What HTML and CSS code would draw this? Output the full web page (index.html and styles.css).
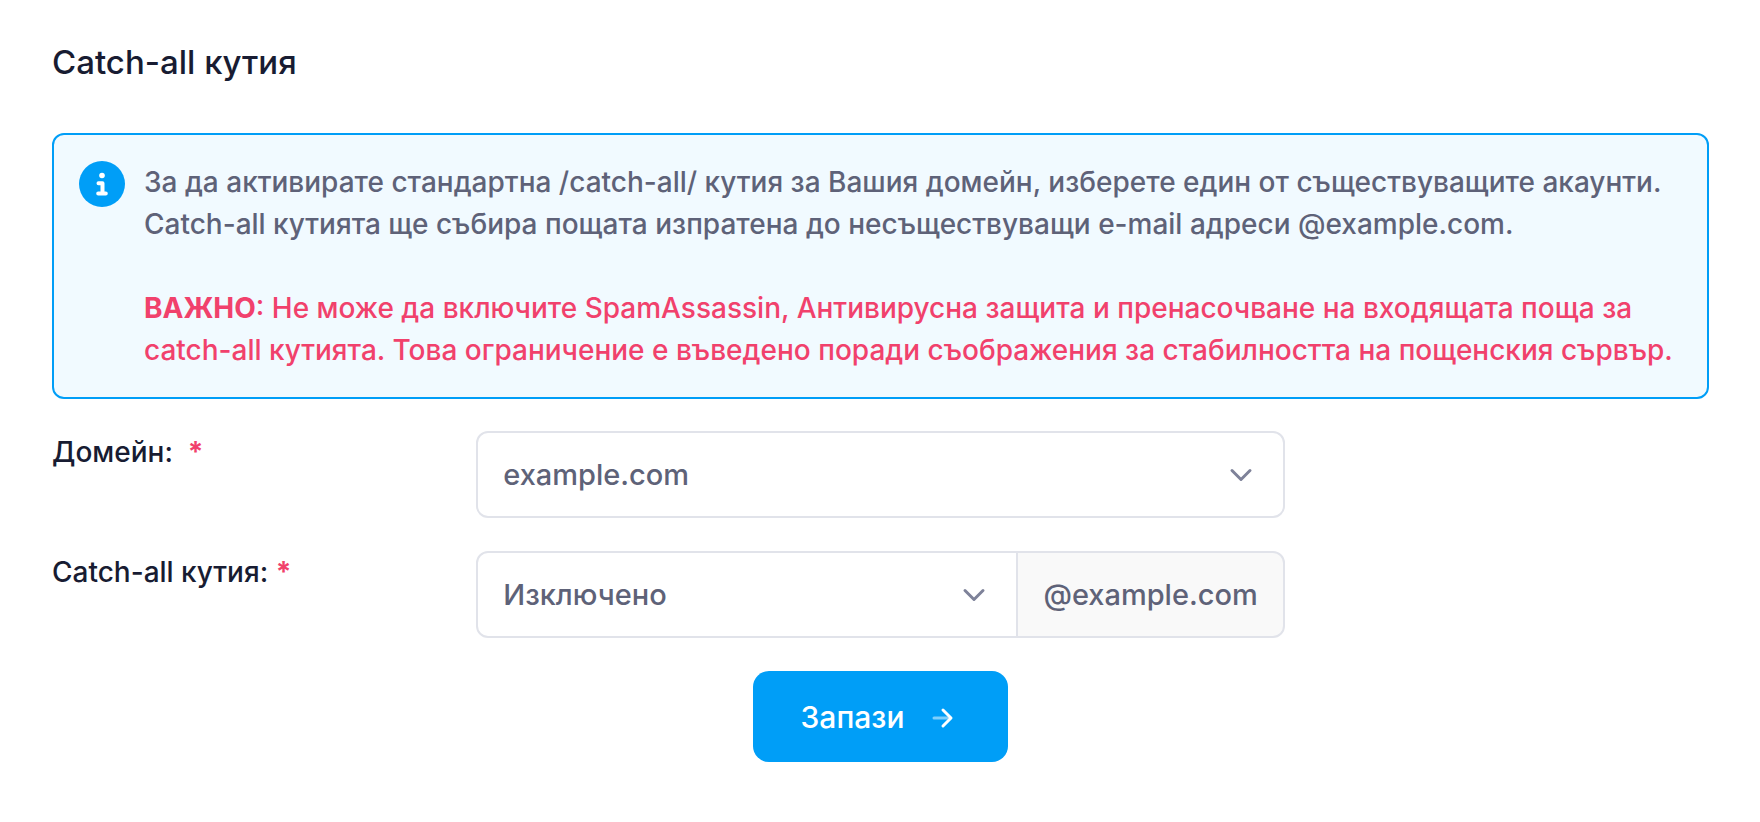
FILE: index.html
```html
<!DOCTYPE html>
<html lang="bg">
<head>
  <meta charset="UTF-8">
  <meta name="viewport" content="width=device-width, initial-scale=1">
  <title>Catch-all кутия</title>
  <link rel="stylesheet" href="styles.css">
</head>
<body>
  <main class="page">
    <h1>Catch-all кутия</h1>

    <div class="notice">
      <svg class="notice-icon" viewBox="0 0 46 46" aria-hidden="true">
        <circle cx="23" cy="23" r="23" fill="#009ef7"/>
        <circle cx="23" cy="14.5" r="2.8" fill="#fff"/>
        <path d="M19.5 22.2H23.5V32.2M19.2 32.4H26.8" fill="none" stroke="#fff" stroke-width="4" stroke-linecap="round" stroke-linejoin="round"/>
      </svg>
      <div class="notice-text">
        <p>За да активирате стандартна /catch-all/ кутия за Вашия домейн, изберете един от съществуващите акаунти. Catch-all кутията ще събира пощата изпратена до несъществуващи e-mail адреси @example.com.</p>
        <p class="danger"><strong>ВАЖНО</strong>: Не може да включите SpamAssassin, Антивирусна защита и пренасочване на входящата поща за catch-all кутията. Това ограничение е въведено поради съображения за стабилността на пощенския сървър.</p>
      </div>
    </div>

    <form class="form">
      <div class="row">
        <label for="domain">Домейн:&nbsp; <span class="required">*</span></label>
        <div class="field">
          <select id="domain" class="select" required>
            <option>example.com</option>
          </select>
        </div>
      </div>

      <div class="row">
        <label for="mailbox">Catch-all кутия: <span class="required">*</span></label>
        <div class="field">
          <select id="mailbox" class="select" required>
            <option>Изключено</option>
          </select>
          <span class="addon">@example.com</span>
        </div>
      </div>

      <button type="submit" class="btn">
        Запази
        <svg class="btn-icon" viewBox="0 0 24 24" aria-hidden="true">
          <path d="M4 13H19" stroke-opacity=".5"/>
          <path d="M13 5L21 13L13 21"/>
        </svg>
      </button>
    </form>
  </main>
</body>
</html>
```

FILE: styles.css
```css
* {
  box-sizing: border-box;
}

body {
  margin: 0;
  background-color: #fff;
  color: #181c32;
  font-family: Inter, "Liberation Sans", sans-serif;
  font-size: 28px;
  font-weight: 500;
  line-height: 42px;
}

.page {
  padding: 40px 51px 60px 52px;
}

h1 {
  margin: 0 0 49px;
  font-size: 33px;
  font-weight: 500;
  line-height: 44px;
}

.notice {
  display: flex;
  align-items: flex-start;
  gap: 19px;
  padding: 26px 25px;
  border: 2px solid #009ef7;
  border-radius: 12px;
  background-color: #f1faff;
  color: #5e6278;
}

.notice-icon {
  flex: none;
  width: 46px;
  height: 46px;
}

.notice-text p {
  margin: 0;
}

.notice-text .danger {
  margin-top: 42px;
}

.danger,
.required {
  color: #f1416c;
}

.danger strong,
.required {
  font-weight: 700;
}

.form {
  display: flex;
  flex-direction: column;
  gap: 33px;
  margin-top: 32px;
}

.row {
  display: grid;
  grid-template-columns: repeat(4, 1fr);
  column-gap: 40px;
}

.field {
  grid-column: 2 / span 2;
  display: flex;
  font-size: 29px;
}

.select {
  flex: 1;
  min-width: 0;
  height: 87px;
  padding: 0 72px 0 25px;
  border: 2px solid #e1e3ea;
  border-radius: 12px;
  background: #fff url("data:image/svg+xml,%3Csvg xmlns='http://www.w3.org/2000/svg' viewBox='0 0 16 16'%3E%3Cpath fill='none' stroke='%237e8299' stroke-linecap='round' stroke-linejoin='round' stroke-width='2' d='M2 5l6 6 6-6'/%3E%3C/svg%3E") no-repeat right 30px center / 24px 24px;
  color: #5e6278;
  font: inherit;
  appearance: none;
}

.select:not(:last-child) {
  border-radius: 12px 0 0 12px;
}

.addon {
  display: flex;
  align-items: center;
  margin-left: -2px;
  padding: 0 25px;
  border: 2px solid #e1e3ea;
  border-radius: 0 12px 12px 0;
  background-color: #f9f9f9;
  color: #5e6278;
}

.btn {
  display: flex;
  align-items: center;
  align-self: center;
  gap: 26px;
  height: 91px;
  padding: 0 54px 0 48px;
  border: 0;
  border-radius: 16px;
  background-color: #009ef7;
  color: #fff;
  font: inherit;
  font-size: 30px;
  cursor: pointer;
}

.btn:hover {
  background-color: #0095e8;
}

.btn-icon {
  width: 24px;
  height: 24px;
  fill: none;
  stroke: #fff;
  stroke-width: 3;
  stroke-linecap: round;
  stroke-linejoin: round;
}
```
